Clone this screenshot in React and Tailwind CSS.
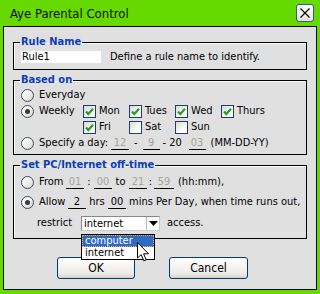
import React from 'react'

/* XP-ish form bits */
function Radio({ checked }) {
  return (
    <span className="w-[13px] h-[13px] shrink-0 rounded-full border border-[#3b4d62] bg-[linear-gradient(135deg,#ffffff_20%,#d4d4cc)] flex items-center justify-center">
      {checked && <span className="w-[5px] h-[5px] rounded-full bg-[#3a3a3a]" />}
    </span>
  )
}

function Check({ checked, label }) {
  return (
    <span className="w-[46px] flex items-center shrink-0">
      <span className="w-[13px] h-[13px] shrink-0 border border-[#1c3f6e] bg-[linear-gradient(135deg,#d8d8d2,#ffffff_70%)] flex items-center justify-center">
        {checked && (
          <svg width="11" height="11" viewBox="0 0 11 11">
            <path d="M2 5.5 L4.3 8 L9 2.8" fill="none" stroke="#21a121" strokeWidth="2.2" />
          </svg>
        )}
      </span>
      <span className="ml-[3px]">{label}</span>
    </span>
  )
}

function Field({ w = 18, value, dim = true }) {
  return (
    <span
      className={`h-[13px] leading-[12px] border-b border-black text-center shrink-0 ${dim ? 'text-[#a8a494]' : 'text-black'}`}
      style={{ width: w }}
    >
      {value}
    </span>
  )
}

function Group({ title, className = '', children }) {
  return (
    <fieldset className={`mx-[9px] border border-black shadow-[inset_1px_1px_0_#fff] pl-[7px] ${className}`}>
      <legend className="px-[1px] -ml-[1px] text-[11px] font-bold leading-[14px] text-[#0b3db8]">{title}</legend>
      {children}
    </fieldset>
  )
}

export default function App() {
  return (
    <div className="w-[320px] h-[294px] bg-[#66d900] flex flex-col px-[3px] pb-[4px] text-[11px] text-black font-['DejaVu_Sans_Condensed','Liberation_Sans',sans-serif]">
      {/* title bar */}
      <div className="h-[26px] flex items-center justify-between pl-[7px] pr-[3px] shrink-0">
        <span className="text-[13px] text-[#111] pt-[1px]">Aye Parental Control</span>
        <button className="w-[18px] h-[18px] rounded-[3px] border border-[#3a5a8c] bg-[linear-gradient(#ffffff,#e4e4de)] flex items-center justify-center">
          <svg width="12" height="12" viewBox="0 0 12 12">
            <path d="M1.5 1.5 L10.5 10.5 M10.5 1.5 L1.5 10.5" stroke="#000" strokeWidth="1.2" />
          </svg>
        </button>
      </div>

      <div className="flex-1 border border-black bg-[#e0e0e0] pt-[8px]">
        <Group title="Rule Name" className="pb-[6px]">
          <div className="flex items-center h-[12px] mt-[2px]">
            <span className="w-[80px] h-[12px] leading-[12px] bg-white pl-[1px]">Rule1</span>
            <span className="ml-[9px]">Define a rule name to identify.</span>
          </div>
        </Group>

        <Group title="Based on" className="mt-[3px] pb-[3px]">
          <div className="flex items-center h-[16px] gap-[5px]">
            <Radio />
            <span>Everyday</span>
          </div>
          <div className="flex items-center h-[17px]">
            <span className="w-[62px] flex items-center gap-[5px] shrink-0">
              <Radio checked />
              <span>Weekly</span>
            </span>
            <Check checked label="Mon" />
            <Check checked label="Tues" />
            <Check checked label="Wed" />
            <Check checked label="Thurs" />
          </div>
          <div className="flex items-center h-[15px] pl-[62px]">
            <Check checked label="Fri" />
            <Check label="Sat" />
            <Check label="Sun" />
          </div>
          <div className="flex items-center h-[16px]">
            <Radio />
            <span className="ml-[5px] w-[72px]">Specify a day:</span>
            <Field value="12" />
            <span className="mx-[5px]">-</span>
            <Field w={17} value="9" />
            <span className="ml-[3px] w-[26px]">- 20</span>
            <Field w={17} value="03" />
            <span className="ml-[5px]">(MM-DD-YY)</span>
          </div>
        </Group>

        <Group title="Set PC/Internet off-time" className="mt-[3px] pb-[4px]">
          <div className="flex items-center h-[20px]">
            <Radio />
            <span className="ml-[5px] w-[27px]">From</span>
            <Field value="01" />
            <span className="w-[10px] text-center">:</span>
            <Field value="00" />
            <span className="w-[17px] text-center">to</span>
            <Field value="21" />
            <span className="w-[7px] text-center">:</span>
            <Field w={20} value="59" />
            <span className="ml-[4px]">(hh:mm),</span>
          </div>
          <div className="flex items-center h-[20px]">
            <Radio checked />
            <span className="ml-[5px] w-[29px]">Allow</span>
            <Field value="2" dim={false} />
            <span className="w-[22px] text-center">hrs</span>
            <Field value="00" dim={false} />
            <span className="ml-[3px] whitespace-nowrap">mins Per Day, when time runs out,</span>
          </div>
          <div className="flex items-center h-[22px] pl-[16px]">
            <span className="w-[44px]">restrict</span>
            <span className="relative w-[79px] h-[15px] border border-[#888] border-r-[#ccc] border-b-[#ccc] bg-white flex items-center">
              <span className="flex-1 pl-[2px] leading-[13px]">internet</span>
              <span className="w-[13px] h-[13px] flex items-center justify-center border-l border-[#bbb]">
                <svg width="9" height="5" viewBox="0 0 9 5"><path d="M0 0 H9 L4.5 5 Z" fill="#000" /></svg>
              </span>
              {/* open list */}
              <span className="absolute left-[-1px] top-[17px] w-[74px] border border-black bg-white flex flex-col z-10">
                <span className="h-[12px] leading-[10px] pl-[2px] bg-[#316ac5] text-white border border-dotted border-[#f0b050]">computer</span>
                <span className="h-[12px] leading-[12px] pl-[3px]">internet</span>
              </span>
              {/* mouse pointer */}
              <svg className="absolute left-[55px] top-[25px] z-20" width="13" height="20" viewBox="0 0 13 20">
                <path d="M0.5 0.5 V16 L4.2 12.6 L6.8 18.8 L9.2 17.8 L6.6 11.8 H11.5 Z" fill="#fff" stroke="#000" strokeWidth="1" />
              </svg>
            </span>
            <span className="ml-[7px]">access.</span>
          </div>
        </Group>

        <div className="flex mt-[18px] pl-[53px] gap-[34px]">
          <button className="w-[78px] h-[22px] rounded-[3px] border border-[#003c74] bg-[linear-gradient(#ffffff,#ecebe6_80%,#d6d0c5)] text-[12px]">OK</button>
          <button className="w-[79px] h-[22px] rounded-[3px] border border-[#003c74] bg-[linear-gradient(#ffffff,#ecebe6_80%,#d6d0c5)] text-[12px]">Cancel</button>
        </div>
      </div>
    </div>
  )
}
